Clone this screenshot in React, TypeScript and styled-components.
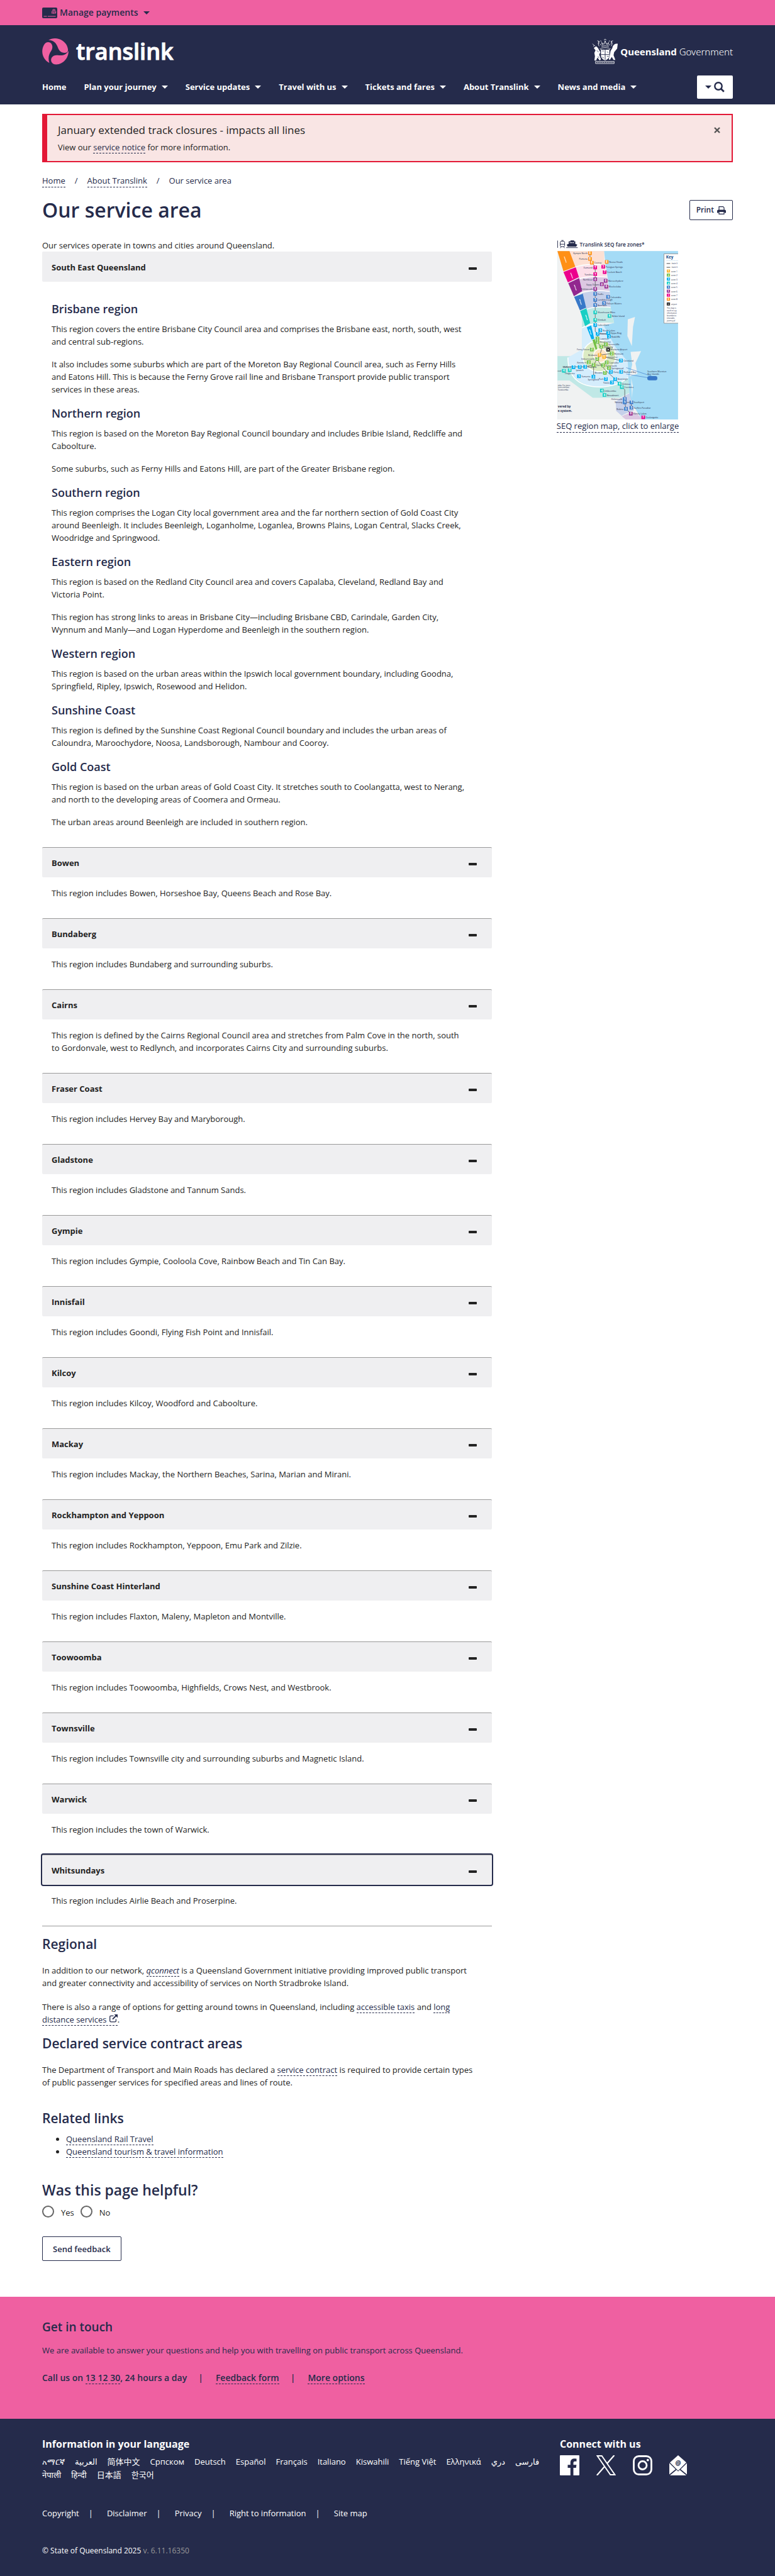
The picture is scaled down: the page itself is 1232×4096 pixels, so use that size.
import React, { useState } from "react";
import styled, { createGlobalStyle } from "styled-components";

const navy = "#252b4b";
const pink = "#ef60a1";
const ink = "#232323";

const GlobalStyle = createGlobalStyle`
  *, *::before, *::after { box-sizing: border-box; }
  body {
    margin: 0;
    background: #fff;
    color: ${ink};
    font: 400 13px/20px "Open Sans", "Noto Sans", "Noto Sans CJK SC", "DejaVu Sans", sans-serif;
  }
  button, input { font: inherit; }
  button { cursor: pointer; }
`;

const Container = styled.div`
  width: 100%;
  max-width: 1130px;
  margin: 0 auto;
  padding: 0 16px;
`;

const TopBar = styled.div`
  background: ${pink};
`;

const TopBarInner = styled(Container)`
  display: flex;
  align-items: center;
  height: 40px;
`;

const PaymentsButton = styled.button`
  display: flex;
  align-items: center;
  gap: 4px;
  padding: 0;
  border: 0;
  background: none;
  color: ${navy};
  font-size: 14px;
  font-weight: 600;
`;

const Caret = styled.span<{ $gap?: number }>`
  width: 0;
  height: 0;
  margin-left: ${(p) => p.$gap ?? 8}px;
  border: 5px solid transparent;
  border-top-color: currentColor;
  border-bottom-width: 0;
`;

const Header = styled.header`
  background: ${navy};
  color: #fff;
`;

const Brand = styled(Container)`
  display: flex;
  justify-content: space-between;
  align-items: center;
  height: 80px;
  padding-top: 3px;
`;

const LogoLink = styled.a`
  display: flex;
  align-items: center;
  gap: 12px;
  color: #fff;
  text-decoration: none;
`;

const Wordmark = styled.span`
  font: 600 36px/44px "Open Sans", "Noto Sans", sans-serif;
  -webkit-text-stroke: 1px #fff;
`;

const GovLink = styled(LogoLink)`
  gap: 3px;
  font: 700 15px/24px "Noto Sans", "Open Sans", sans-serif;
  span { font-weight: 300; }
`;

const NavRow = styled(Container)`
  display: flex;
  justify-content: space-between;
  align-items: flex-start;
  height: 46px;
`;

const NavList = styled.ul`
  display: flex;
  gap: 28px;
  margin: 0;
  padding: 8px 0 0;
  list-style: none;
`;

const NavLink = styled.a`
  display: flex;
  align-items: center;
  color: #fff;
  font-weight: 700;
  text-decoration: none;
  white-space: nowrap;
`;

const SearchButton = styled.button`
  display: flex;
  align-items: center;
  justify-content: center;
  gap: 4px;
  width: 57px;
  height: 37px;
  padding: 0;
  border: 0;
  border-radius: 2px;
  background: #fff;
  color: ${navy};
`;

const Alert = styled.section`
  display: flex;
  justify-content: space-between;
  align-items: flex-start;
  margin-top: 15px;
  padding: 12px 18px 12px 17px;
  border: 2px solid #e31836;
  border-left-width: 8px;
  background: #f9e5e4;
`;

const AlertTitle = styled.h2`
  margin: 0 0 5px;
  font-size: 17px;
  line-height: 24px;
  font-weight: 400;
`;

const CloseButton = styled.button`
  display: flex;
  padding: 7px 0;
  border: 0;
  background: none;
  color: #555;
`;

const TextLink = styled.a`
  color: ${navy};
  text-decoration: none;
  border-bottom: 1px dashed ${navy};
`;

const Crumbs = styled.ol`
  display: flex;
  gap: 15px;
  margin: 19px 0 0;
  padding: 0;
  list-style: none;
  color: ${navy};
  li { display: flex; gap: 15px; }
`;

const TitleRow = styled.div`
  display: flex;
  justify-content: space-between;
  align-items: center;
  margin-top: 16px;
`;

const headingFont = `"Open Sans", "Noto Sans", sans-serif`;

const PageTitle = styled.h1`
  margin: 0;
  color: ${navy};
  font: 600 32px/40px ${headingFont};
`;

const OutlineButton = styled.button<{ $small?: boolean }>`
  display: inline-flex;
  align-items: center;
  justify-content: center;
  gap: 5px;
  height: ${(p) => (p.$small ? 32 : 39)}px;
  padding: 0 ${(p) => (p.$small ? 10 : 16)}px;
  border: 1px solid ${navy};
  border-radius: 2px;
  background: #fff;
  color: ${navy};
  font-weight: 600;
  font-size: ${(p) => (p.$small ? 12 : 13)}px;
`;

const Columns = styled.div`
  display: flex;
  align-items: flex-start;
  gap: 17px;
  margin-top: 26px;
`;

const Main = styled.main`
  flex: 715 1 0;
  min-width: 0;
`;

const Aside = styled.aside`
  flex: 366 1 0;
  display: flex;
  flex-direction: column;
  align-items: center;
`;

const MapLink = styled.a`
  display: flex;
  flex-direction: column;
  align-items: center;
  color: ${navy};
  text-decoration: none;
  span { border-bottom: 1px dashed ${navy}; }
`;

const Intro = styled.p`
  margin: 0;
`;

const Accordion = styled.div`
  border-bottom: 1px solid #999;
`;

const AccordionTitle = styled.h3`
  margin: 0;
  font: inherit;
`;

const AccordionButton = styled.button<{ $first?: boolean }>`
  display: flex;
  justify-content: space-between;
  align-items: center;
  width: 100%;
  height: 48px;
  padding: 0 24px 0 15px;
  border: 0;
  border-top: 1px solid ${(p) => (p.$first ? "#efeff1" : "#999")};
  border-radius: 2px;
  background: #efeff1;
  color: ${ink};
  font-weight: 700;
  text-align: left;
  &:focus { outline: 2px solid ${navy}; }
`;

const Minus = styled.span`
  width: 13px;
  height: 4px;
  margin-top: 4px;
  border-radius: 1px;
  background: ${ink};
`;

const AccordionBody = styled.div`
  padding: 15px 40px 14px 15px;
  p { margin: 0 0 16px; }
`;

const RegionHeading = styled.h4`
  margin: 16px 0 10px;
  color: ${navy};
  font: 600 18px/24px ${headingFont};
`;

const Section = styled.section<{ $top: number }>`
  margin-top: ${(p) => p.$top}px;
  padding-right: 20px;
  p { margin: 0; }
  p + p { margin-top: 18px; }
`;

const SectionHeading = styled.h2<{ $gap: number }>`
  margin: 0 0 ${(p) => p.$gap}px;
  color: ${navy};
  font: 600 21px/26px ${headingFont};
`;

const LinkList = styled.ul`
  margin: 0;
  padding-left: 38px;
`;

const Feedback = styled.form`
  margin: 35px 0 57px;
`;

const FeedbackTitle = styled.h2`
  margin: 0 0 9px;
  color: ${navy};
  font: 600 23px/32px ${headingFont};
`;

const Options = styled.fieldset`
  display: flex;
  gap: 10px;
  margin: 0 0 30px;
  padding: 0;
  border: 0;
  label { display: flex; gap: 11px; line-height: 22px; height: 19px; }
`;

const Radio = styled.input`
  appearance: none;
  width: 19px;
  height: 19px;
  margin: 0;
  border: 2px solid #666;
  border-radius: 50%;
  &:checked { background: radial-gradient(${navy} 40%, #fff 45%); }
`;

const Contact = styled.section`
  background: ${pink};
  color: ${navy};
  padding: 35px 0 55px;
  p { margin: 0 0 24px; }
`;

const ContactTitle = styled(SectionHeading)`
  font-size: 19px;
`;

const PipeList = styled.ul<{ $bold?: boolean; $before: number; $after: number }>`
  display: flex;
  margin: 0;
  padding: 0;
  list-style: none;
  font-size: ${(p) => (p.$bold ? 14 : 13)}px;
  font-weight: ${(p) => (p.$bold ? 600 : 400)};
  li + li::before {
    content: "|";
    margin: 0 ${(p) => p.$after}px 0 ${(p) => p.$before}px;
  }
`;

const Footer = styled.footer`
  background: ${navy};
  color: #fff;
  padding: 28px 0 30px;
`;

const FooterColumns = styled.div`
  display: flex;
`;

const FooterLink = styled.a`
  color: inherit;
  text-decoration: none;
`;

const Languages = styled.div`
  flex: 823 1 0;
`;

const Connect = styled.div`
  flex: 275 1 0;
`;

const FooterHeading = styled.h2`
  margin: 0 0 6px;
  font: 700 16px/24px ${headingFont};
`;

const LanguageList = styled.ul`
  display: flex;
  flex-wrap: wrap;
  gap: 0 16px;
  margin: 0 16px 0 0;
  padding: 0;
  list-style: none;
  li { height: 21px; line-height: 21px; }
`;

const SocialList = styled.ul`
  display: flex;
  gap: 27px;
  margin: 0;
  padding: 0;
  list-style: none;
  svg { display: block; }
`;

const LegalRow = styled.div`
  margin: 40px 0;
`;

const Copyright = styled.p`
  margin: 0;
  font-size: 12px;
  color: #fff;
  span { color: #999; }
`;

function CardIcon() {
  return (
    <svg width="24" height="17" viewBox="0 0 24 17" aria-hidden="true">
      <rect width="24" height="17" rx="2" fill={navy} />
      <path d="M2.500 14h5M9 14h12.500" stroke={pink} strokeWidth="1" />
      <g fill="none" stroke={pink} strokeWidth="0.9">
        <path d="M15.500 9.500V7.200a3.200 3.200 0 0 1 6.200-1v3M17 10V7.200a1.700 1.700 0 0 1 3.300 0V10M18.600 7.200V10M16.500 3.600a4 4 0 0 1 4.300 0" />
      </g>
    </svg>
  );
}

function TranslinkMark() {
  return (
    <svg width="42" height="43" viewBox="0 0 44 45" aria-hidden="true">
      <g fill={pink}>
        <path d="M10.500 4C15 1 22 0 28 2c8 2.500 14 9 15 17c0.500 5-2.500 6-6 6c-6 0-9-4-10.500-8C24 10 20 4 10.500 4Z" />
        <path d="M3 12C6 6.500 12 6 15 9.500c3 4 2.500 8.500 0 12.500c-4 6-5.500 12-3 20C1 36 -3 23 3 12Z" />
        <path d="M44 22C44 34 35 44 24 44.500C16 45 13 38 16 33c3-4 7-4.500 12-3.700C35 30 40 28 44 22Z" />
      </g>
    </svg>
  );
}

function CrestIcon() {
  return (
    <svg width="42" height="41" viewBox="0 0 44 43" aria-hidden="true">
      <g fill="#fff">
        <path d="M15 19h14v9c0 5-3 7-7 9c-4-2-7-4-7-9Z" />
        <path d="M3 16l4-3 3 3 4 7-2 4 3 8-2 2-4-5-2 5H4l1-7-1-6 2-4Z" />
        <path d="M43 9l-1 8-5 6-1 5 3 8h-3l-3-5-3 5-2-1 2-8 1-6 3-5c1-5 4-7 8-7Z" />
      </g>
      <path d="M22 19v17M15 27h14" stroke={navy} strokeWidth="1" />
      <path d="M17 21h3M25 22l2 2M17 31l3 2M25 30h3M8 20l3 3M10 30l2 3" stroke={navy} strokeWidth="0.8" />
      <g fill="none" stroke="#fff" strokeWidth="0.9">
        <path d="M15 17c2-2 12-2 14 0M16 14c2-2 10-2 12 0M18 12l-2-5 4 3 2-6 2 6 4-3-2 5M20 3l2-2 2 2M12 13c-2-3-2-6 0-8M9 4l3 1-1 4M32 13c2-3 2-6 0-8M35 4l-3 1 1 4M13 9l3 3M31 9l-3 3M1 9l3 3M2 13l3-1M14 4l2 1M30 4l-2 1" />
        <path d="M13 17l3 2M31 17l-3 2M6 38.500h31v3.500H6Z" />
      </g>
      <path d="M8 40.200h28" stroke="#fff" strokeWidth="1.200" strokeDasharray="2 1" opacity="0.6" />
    </svg>
  );
}

function SearchIcon() {
  return (
    <svg width="17" height="17" viewBox="0 0 17 17" fill="none" stroke={navy} aria-hidden="true">
      <circle cx="7" cy="7" r="5.700" strokeWidth="2.400" />
      <path d="M11 11l4.800 4.800" strokeWidth="2.800" />
    </svg>
  );
}

function PrintIcon() {
  return (
    <svg width="14" height="13" viewBox="0 0 14 13" aria-hidden="true">
      <path d="M3 6V0.700h6.500L11 2.200V6" fill="#fff" stroke={navy} strokeWidth="1.200" />
      <path d="M0 10.500V7.500Q0 5.500 2 5.500h10q2 0 2 2v3h-2.500V9h-9v1.500Z" fill={navy} />
      <path d="M3 9v3.300h8V9" fill="#fff" stroke={navy} strokeWidth="1.200" />
    </svg>
  );
}

function ExternalIcon() {
  return (
    <svg width="14" height="13" viewBox="0 0 14 13" fill="none" stroke={navy} aria-hidden="true">
      <path d="M7.500 2.300H3.300Q1.700 2.300 1.700 3.900v6.300q0 1.600 1.600 1.600h6.500q1.600 0 1.600-1.600V7.500" strokeWidth="1.300" />
      <path d="M6 7.700L12 1.700" strokeWidth="1.900" />
      <path d="M8.500 0H14v5.500Z" fill={navy} stroke="none" />
    </svg>
  );
}

/* Each zone: the wedge on the left edge, its colour, the tint and the area it covers. */
const zones: [string, string, string, string][] = [
  ["120,110 180,110 209,188 150,210", "#ff9016", "#fde0d3", "M178 110H352V178Q260 170 207 190Z"],
  ["150,214 211,191 227,240 172,266", "#ec008c", "#fcdfe9", "M208 194Q270 175 352 182L365 240Q290 232 225 248Z"],
  ["174,270 228,245 243,310 202,335", "#92278f", "#dcc8e2", "M226 252Q290 236 365 242L380 310Q300 300 240 316Z"],
  ["203,338 246,322 263,392 232,405", "#3878c8", "#c6d0ea", "M242 320Q310 302 380 314L384 388Q310 382 264 400Z"],
  ["233,408 264,395 283,468 258,484", "#19cfc4", "#c0e8e6", "M242 405Q310 384 384 392L402 468Q300 458 242 490Z"],
  ["266,490 288,480 303,546 290,550", "#00aeef", "#d5edfc", "M242 494Q310 470 350 480V560H242Z"],
  ["294,552 306,548 318,598 310,600", "#72bf44", "#dcebc4", "M300 560H330V600H300Z"],
];

type Stop = [number, number, number, string, ("l" | "r" | "b")?];

const stops: Stop[] = [
  [282, 121, 8, "Gympie North", "l"], [282, 149, 8, "Pomona", "l"], [291, 168, 8, "Cooroy"],
  [365, 164, 8, "Noosa Heads"], [308, 192, 7, "Eumundi", "l"], [348, 188, 7, "Peregian Springs"],
  [355, 215, 7, "Coolum Beach"], [308, 225, 7, "Yandina", "l"], [308, 250, 6, "Nambour", "l"],
  [360, 258, 6, "Maroochydore"], [341, 275, 6, "Sippy Downs", "l"], [363, 287, 6, "Mooloolaba"],
  [308, 299, 6, "Palmwoods", "l"], [308, 323, 5, "Eudlo"], [372, 338, 5, "Caloundra"],
  [308, 353, 5, "Landsborough"], [352, 369, 5, "Pelican Waters"], [308, 379, 5, "Beerwah"],
  [308, 415, 4, "Glasshouse Mtns"], [379, 433, 4, "Bribie Island"], [308, 453, 4, "Elimbah"],
  [308, 478, 3, "Caboolture"], [333, 504, 3, "North Lakes"], [372, 518, 3, "Kippa-Ring"],
  [320, 522, 3, "Petrie"], [376, 535, 3, "Redcliffe"], [319, 545, 2, "Lawnton"],
  [319, 561, 2, "Strathpine"], [361, 574, 2, "Shorncliffe"], [338, 586, 2, "Geebung"],
  [291, 600, 2, "Ferny Grove", "l"], [390, 620, 2, "Wynnum"], [330, 627, 1, "Brisbane", "l"],
  [352, 637, 1, "Coorparoo"], [318, 647, 2, "Indooroopilly", "l"], [436, 655, 3, "Cleveland"],
  [276, 663, 2, "Kenmore", "l"], [365, 664, 2, "Capalaba"], [300, 677, 2, "Darra"],
  [347, 679, 2, "Sunnybank"], [376, 692, 2, "Springwood"], [258, 686, 3, "Redbank"],
  [231, 687, 3, "Ipswich", "b"], [200, 688, 3, "Walloon", "l"], [181, 703, 4, "Thagoona", "b"],
  [152, 706, 4, "ood", "l"], [437, 711, 3, "Redland Bay"], [386, 711, 3, "Daisy"],
  [356, 716, 2, "Browns", "l"], [299, 735, 3, "Springfield", "b"], [227, 733, 3, "Yamanto"],
  [361, 747, 3, "Park", "l"], [407, 747, 3, "Beenleigh"], [391, 764, 3, "Yatala", "l"],
  [429, 770, 4, "Ormeau"], [440, 787, 4, "Coomera"], [341, 804, 4, "Jimboomba"],
  [354, 826, 4, "Beaudesert"], [455, 846, 5, "Helensvale", "l"], [488, 863, 5, "Southport"],
  [455, 863, 5, "Nerang", "l"], [488, 889, 5, "Surfers Paradise"], [461, 895, 5, "Robina", "l"],
  [485, 919, 6, "Varsity Lakes"], [547, 937, 7, "Coolangatta"],
];

const zoneColour = ["", "#fdb733", "#72bf44", "#00aeef", "#19cfc4", "#3878c8", "#92278f", "#ec008c", "#ff9016"];

function FareZoneMap() {
  return (
    <svg
      width="192"
      height="287"
      viewBox="120 50 600 898"
      role="img"
      aria-label="Map of Translink SEQ fare zones"
      fontFamily="Open Sans, sans-serif"
    >
      <g fill="none" stroke={navy} strokeWidth="3">
        <path d="M121 58v36" />
        <rect x="134" y="62" width="22" height="26" rx="5" />
        <path d="M134 76h22M134 95l6-7M156 95l-6-7M140 57h10" />
      </g>
      <path d="M185 57h18v5h6v12l10 4-6 10h-42l-5-10 10-4V62h9Z" fill={navy} />
      <path d="M181 68h24" stroke="#fff" strokeWidth="4" strokeDasharray="5 3" />
      <path d="M164 93h57" stroke={navy} strokeWidth="3" />
      <text x="231" y="86" fill={navy} fontSize="26" fontWeight="600">Translink SEQ fare zones*</text>
      <rect x="120" y="110" width="600" height="838" fill="#a4dbf6" />
      <path d="M120 110H352L360 180 380 310 384 390 402 468 350 480 370 540 400 600 450 640 470 720 480 850 540 948H120Z" fill="#f0f2f2" />
      {zones.map(([band, , fill, area]) => (
        <path key={band} d={area} fill={fill} />
      ))}
      <path d="M120 633H242V495Q300 468 348 480L400 600 470 690 478 815 430 840H296L180 754H120Z" fill="#c0e8e6" />
      <path d="M242 495Q300 468 350 480L410 590 470 660 474 740Q420 786 330 786Q180 780 172 640L242 600Z" fill="#d5edfc" />
      <path d="M172 640Q174 786 330 786Q420 784 470 740" fill="none" stroke="#fff" strokeWidth="5" />
      <ellipse cx="328" cy="632" rx="82" ry="78" fill="#dcebc4" stroke="#fff" strokeWidth="5" />
      <ellipse cx="334" cy="630" rx="34" ry="34" fill="#fde5c5" stroke="#fff" strokeWidth="4" />
      <path d="M410 860Q440 835 478 818L500 905Q460 915 440 930L412 905Z" fill="#c6d0ea" />
      <path d="M440 932Q480 912 510 914L545 948H460Z" fill="#dcc8e2" />
      <path d="M470 450l36-12-10 50-6 95-22-50ZM484 612l52-4-28 60 10 52-40 14 14-60ZM487 742l8 40-4 60Z" fill="#f0f2f2" />
      <g fill="none" stroke="#fff" strokeWidth="4">
        <path d="M207 190Q260 170 352 180M225 247Q290 232 365 240M240 315Q300 300 380 311M264 400Q310 382 384 390M242 492Q300 462 348 478" />
      </g>
      {zones.map(([band, colour]) => (
        <polygon key={band} points={band} fill={colour} />
      ))}
      <g stroke="#fff" strokeWidth="4" strokeDasharray="3 1">
        <path d="M154 138l10 30M186 218l10 28M204 278l10 28M231 350l8 28M261 428l8 26M280 500l8 26" />
      </g>
      <g fill="none" stroke="#555" strokeWidth="2.500">
        <path d="M282 121V150L308 190V510L320 522V560L340 600 330 627M320 522H372M338 586L361 574M330 627L300 677V735M300 677L258 686H152M330 627L320 655 356 700 407 747 455 800V863L461 895 485 919M330 627L390 620M352 637L436 655M455 863H488V889" />
      </g>
      <path d="M462 690L595 735M462 722L570 740" stroke="#3878c8" strokeWidth="2" />
      <rect x="567" y="732" width="50" height="21" rx="10" fill="#3878c8" />
      <g fill={navy} fontSize="11">
        <text x="568" y="712">Southern Moreton</text>
        <text x="568" y="727">Bay Islands</text>
        {stops.map(([x, y, , name, side]) => (
          <text
            key={name}
            x={side === "l" ? x - 12 : side === "b" ? x : x + 12}
            y={side === "b" ? y + 20 : y + 5}
            textAnchor={side === "l" ? "end" : side === "b" ? "middle" : "start"}
          >
            {name}
          </text>
        ))}
        <text x="384" y="605">Brisbane Airport</text>
        <text x="122" y="781" fontSize="9">mbo. For more</text>
        <text x="122" y="792" fontSize="9">tions and bus</text>
        <text x="122" y="803" fontSize="9">Toowoomba</text>
        <text x="122" y="889" fontSize="15" fontWeight="700">vered by</text>
        <text x="122" y="911" fontSize="15" fontWeight="700">e system.</text>
      </g>
      {stops.map(([x, y, zone, name]) => (
        <g key={name}>
          <rect x={x - 9} y={y - 9} width="18" height="18" fill={zoneColour[zone]} />
          <text x={x} y={y + 5} fill="#fff" fontSize="14" fontWeight="700" textAnchor="middle">{zone}</text>
        </g>
      ))}
      <rect x="363" y="591" width="19" height="19" fill="#222" />
      <path d="M367 595l11 11M378 595l-11 11" stroke="#fff" strokeWidth="2.500" />
      <path d="M722 124H650V469H722" fill="#fff" stroke="#888" strokeWidth="2.500" />
      <text x="660" y="147" fill="#1b4f8c" fontSize="20" fontWeight="700">Key</text>
      <path d="M662 158h58" stroke="#7fb4d8" strokeWidth="1.500" strokeDasharray="3 2" />
      <path d="M663 172h18M663 191h18" stroke="#444" strokeWidth="3" />
      <g fill={navy} fontSize="10">
        <text x="688" y="176">train li</text>
        <text x="688" y="195">train li</text>
        {[1, 2, 3, 4, 5, 6, 7, 8].map((n) => (
          <text key={n} x="686" y={195 + n * 20}>zone {n}</text>
        ))}
        <text x="686" y="377" fontSize="9">airport</text>
        {["This map is", "used on a g", "information", "boundaries", "timetable", "journey pl"].map((t, i) => (
          <text key={t} x="664" y={396 + i * 13} fontSize="9">{t}</text>
        ))}
      </g>
      {[1, 2, 3, 4, 5, 6, 7, 8].map((n) => (
        <g key={n}>
          <rect x="664" y={n * 20 + 182} width="16" height="15" fill={zoneColour[n]} />
          <text x="672" y={n * 20 + 194} fill="#fff" fontSize="12" fontWeight="700" textAnchor="middle">{n}</text>
        </g>
      ))}
      <rect x="664" y="366" width="16" height="15" fill="#222" />
      <path d="M668 370l8 8M676 370l-8 8" stroke="#fff" strokeWidth="2" />
    </svg>
  );
}

function FacebookIcon() {
  return (
    <svg width="31" height="32" viewBox="0 0 31 32" aria-hidden="true">
      <path d="M1 0h29q1 0 1 1v30q0 1-1 1h-8.500V20h4.200l0.700-4.800h-4.900V12q0-2.300 2.400-2.300h2.600V5.400q-9.200-1.500-9.700 5.400v4.400h-4.300V20h4.300v12H1q-1 0-1-1V1Q0 0 1 0Z" fill="#fff" />
    </svg>
  );
}

function XIcon() {
  return (
    <svg width="31" height="32" viewBox="0 0 31 32" aria-hidden="true">
      <path d="M1.500 1h7.200l20.800 30h-7.200Z" fill="none" stroke="#fff" strokeWidth="2" />
      <path d="M28.500 0L17 13.200M13 18L0.800 32" stroke="#fff" strokeWidth="2.200" />
    </svg>
  );
}

function InstagramIcon() {
  return (
    <svg width="31" height="32" viewBox="0 0 31 32" fill="none" stroke="#fff" aria-hidden="true">
      <rect x="1.500" y="1.500" width="28" height="29" rx="8" strokeWidth="2.800" />
      <circle cx="15.500" cy="16" r="6.500" strokeWidth="2.800" />
      <circle cx="23.800" cy="7.700" r="1.900" fill="#fff" stroke="none" />
    </svg>
  );
}

function NewsletterIcon() {
  return (
    <svg width="28" height="32" viewBox="0 0 28 32" aria-hidden="true">
      <path d="M14 0l13 11.500L14 24.500 1 11.500Z" fill="#fff" />
      <path d="M0 12.500L10 22.300 0 30.500ZM28 12.500L18 22.300l10 8.200ZM1 32l10.500-8.700L14 25.800l2.500-2.500L27 32Z" fill="#fff" />
      <text x="14" y="16" textAnchor="middle" fill={navy} fontFamily="Open Sans, sans-serif" fontSize="10" fontWeight="700">@</text>
    </svg>
  );
}

const navItems = [
  "Home",
  "Plan your journey",
  "Service updates",
  "Travel with us",
  "Tickets and fares",
  "About Translink",
  "News and media",
];

const seqRegions: { name: string; text: string[] }[] = [
  {
    name: "Brisbane region",
    text: [
      "This region covers the entire Brisbane City Council area and comprises the Brisbane east, north, south, west and central sub-regions.",
      "It also includes some suburbs which are part of the Moreton Bay Regional Council area, such as Ferny Hills and Eatons Hill. This is because the Ferny Grove rail line and Brisbane Transport provide public transport services in these areas.",
    ],
  },
  {
    name: "Northern region",
    text: [
      "This region is based on the Moreton Bay Regional Council boundary and includes Bribie Island, Redcliffe and Caboolture.",
      "Some suburbs, such as Ferny Hills and Eatons Hill, are part of the Greater Brisbane region.",
    ],
  },
  {
    name: "Southern region",
    text: [
      "This region comprises the Logan City local government area and the far northern section of Gold Coast City around Beenleigh. It includes Beenleigh, Loganholme, Loganlea, Browns Plains, Logan Central, Slacks Creek, Woodridge and Springwood.",
    ],
  },
  {
    name: "Eastern region",
    text: [
      "This region is based on the Redland City Council area and covers Capalaba, Cleveland, Redland Bay and Victoria Point.",
      "This region has strong links to areas in Brisbane City—including Brisbane CBD, Carindale, Garden City, Wynnum and Manly—and Logan Hyperdome and Beenleigh in the southern region.",
    ],
  },
  {
    name: "Western region",
    text: [
      "This region is based on the urban areas within the Ipswich local government boundary, including Goodna, Springfield, Ripley, Ipswich, Rosewood and Helidon.",
    ],
  },
  {
    name: "Sunshine Coast",
    text: [
      "This region is defined by the Sunshine Coast Regional Council boundary and includes the urban areas of Caloundra, Maroochydore, Noosa, Landsborough, Nambour and Cooroy.",
    ],
  },
  {
    name: "Gold Coast",
    text: [
      "This region is based on the urban areas of Gold Coast City. It stretches south to Coolangatta, west to Nerang, and north to the developing areas of Coomera and Ormeau.",
      "The urban areas around Beenleigh are included in southern region.",
    ],
  },
];

const otherRegions: [string, string][] = [
  ["Bowen", "This region includes Bowen, Horseshoe Bay, Queens Beach and Rose Bay."],
  ["Bundaberg", "This region includes Bundaberg and surrounding suburbs."],
  ["Cairns", "This region is defined by the Cairns Regional Council area and stretches from Palm Cove in the north, south to Gordonvale, west to Redlynch, and incorporates Cairns City and surrounding suburbs."],
  ["Fraser Coast", "This region includes Hervey Bay and Maryborough."],
  ["Gladstone", "This region includes Gladstone and Tannum Sands."],
  ["Gympie", "This region includes Gympie, Cooloola Cove, Rainbow Beach and Tin Can Bay."],
  ["Innisfail", "This region includes Goondi, Flying Fish Point and Innisfail."],
  ["Kilcoy", "This region includes Kilcoy, Woodford and Caboolture."],
  ["Mackay", "This region includes Mackay, the Northern Beaches, Sarina, Marian and Mirani."],
  ["Rockhampton and Yeppoon", "This region includes Rockhampton, Yeppoon, Emu Park and Zilzie."],
  ["Sunshine Coast Hinterland", "This region includes Flaxton, Maleny, Mapleton and Montville."],
  ["Toowoomba", "This region includes Toowoomba, Highfields, Crows Nest, and Westbrook."],
  ["Townsville", "This region includes Townsville city and surrounding suburbs and Magnetic Island."],
  ["Warwick", "This region includes the town of Warwick."],
  ["Whitsundays", "This region includes Airlie Beach and Proserpine."],
];

const languages = [
  "አማርኛ", "العربية", "简体中文", "Српском", "Deutsch", "Español", "Français", "Italiano", "Kiswahili",
  "Tiếng Việt", "Ελληνικά", "دري", "فارسی", "नेपाली", "हिन्दी", "日本語", "한국어",
];

function AccordionItem(props: { title: string; first?: boolean; focused?: boolean; children: React.ReactNode }) {
  const [open, setOpen] = useState(true);
  return (
    <section>
      <AccordionTitle>
        <AccordionButton
          type="button"
          aria-expanded={open}
          autoFocus={props.focused}
          $first={props.first}
          onClick={() => setOpen(!open)}
        >
          {props.title}
          <Minus />
        </AccordionButton>
      </AccordionTitle>
      {open && <AccordionBody>{props.children}</AccordionBody>}
    </section>
  );
}

export default function App() {
  return (
    <>
      <GlobalStyle />
      <TopBar>
        <TopBarInner>
          <PaymentsButton type="button">
            <CardIcon />
            Manage payments
            <Caret $gap={4} />
          </PaymentsButton>
        </TopBarInner>
      </TopBar>
      <Header>
        <Brand>
          <LogoLink href="#home">
            <TranslinkMark />
            <Wordmark>translink</Wordmark>
          </LogoLink>
          <GovLink href="#qld">
            <CrestIcon />
            <div>
              Queensland <span>Government</span>
            </div>
          </GovLink>
        </Brand>
        <NavRow>
          <nav>
            <NavList>
              {navItems.map((item) => (
                <li key={item}>
                  <NavLink href="#nav">
                    {item}
                    {item !== "Home" && <Caret />}
                  </NavLink>
                </li>
              ))}
            </NavList>
          </nav>
          <SearchButton type="button" aria-label="Search">
            <Caret $gap={0} />
            <SearchIcon />
          </SearchButton>
        </NavRow>
      </Header>

      <Container>
        <Alert>
          <div>
            <AlertTitle>January extended track closures - impacts all lines</AlertTitle>
            View our <TextLink href="#notice">service notice</TextLink> for more information.
          </div>
          <CloseButton type="button" aria-label="Close">
            <svg width="10" height="10" viewBox="0 0 10 10" stroke="currentColor" strokeWidth="2.400">
              <path d="M1 1l8 8M9 1l-8 8" />
            </svg>
          </CloseButton>
        </Alert>

        <Crumbs>
          <li>
            <TextLink href="#home">Home</TextLink>/
          </li>
          <li>
            <TextLink href="#about">About Translink</TextLink>/
          </li>
          <li>Our service area</li>
        </Crumbs>

        <TitleRow>
          <PageTitle>Our service area</PageTitle>
          <OutlineButton type="button" $small>
            Print <PrintIcon />
          </OutlineButton>
        </TitleRow>

        <Columns>
          <Main>
            <Intro>Our services operate in towns and cities around Queensland.</Intro>
            <Accordion>
              <AccordionItem title="South East Queensland" first>
                {seqRegions.map((region) => (
                  <React.Fragment key={region.name}>
                    <RegionHeading>{region.name}</RegionHeading>
                    {region.text.map((t) => (
                      <p key={t}>{t}</p>
                    ))}
                  </React.Fragment>
                ))}
              </AccordionItem>
              {otherRegions.map(([name, text]) => (
                <AccordionItem key={name} title={name} focused={name === "Whitsundays"}>
                  <p>{text}</p>
                </AccordionItem>
              ))}
            </Accordion>

            <Section $top={15}>
              <SectionHeading $gap={19}>Regional</SectionHeading>
              <p>
                In addition to our network,{" "}
                <TextLink href="#qconnect">
                  <em>qconnect</em>
                </TextLink>{" "}
                is a Queensland Government initiative providing improved public transport and greater connectivity and
                accessibility of services on North Stradbroke Island.
              </p>
              <p>
                There is also a range of options for getting around towns in Queensland, including{" "}
                <TextLink href="#taxis">accessible taxis</TextLink> and{" "}
                <TextLink href="#long-distance">
                  long distance services <ExternalIcon />
                </TextLink>
                .
              </p>
            </Section>
            <Section $top={15}>
              <SectionHeading $gap={19}>Declared service contract areas</SectionHeading>
              <p>
                The Department of Transport and Main Roads has declared a{" "}
                <TextLink href="#contract">service contract</TextLink> is required to provide certain types of public
                passenger services for specified areas and lines of route.
              </p>
            </Section>
            <Section $top={34}>
              <SectionHeading $gap={10}>Related links</SectionHeading>
              <LinkList>
                <li>
                  <TextLink href="#rail">Queensland Rail Travel</TextLink>
                </li>
                <li>
                  <TextLink href="#tourism">Queensland tourism &amp; travel information</TextLink>
                </li>
              </LinkList>
            </Section>

            <Feedback onSubmit={(e) => e.preventDefault()}>
              <FeedbackTitle>Was this page helpful?</FeedbackTitle>
              <Options aria-label="Was this page helpful?">
                <label>
                  <Radio type="radio" name="helpful" value="yes" />
                  Yes
                </label>
                <label>
                  <Radio type="radio" name="helpful" value="no" />
                  No
                </label>
              </Options>
              <OutlineButton type="submit">Send feedback</OutlineButton>
            </Feedback>
          </Main>

          <Aside>
            <MapLink href="#map">
              <FareZoneMap />
              <span>SEQ region map, click to enlarge</span>
            </MapLink>
          </Aside>
        </Columns>
      </Container>

      <Contact>
        <Container>
          <ContactTitle $gap={14}>Get in touch</ContactTitle>
          <p>We are available to answer your questions and help you with travelling on public transport across Queensland.</p>
          <PipeList $bold $before={18} $after={20}>
            <li>
              Call us on <TextLink href="tel:131230">13 12 30</TextLink>, 24 hours a day
            </li>
            <li>
              <TextLink href="#feedback">Feedback form</TextLink>
            </li>
            <li>
              <TextLink href="#more">More options</TextLink>
            </li>
          </PipeList>
        </Container>
      </Contact>

      <Footer>
        <Container>
          <FooterColumns>
            <Languages>
              <FooterHeading>Information in your language</FooterHeading>
              <LanguageList>
                {languages.map((l) => (
                  <li key={l}>
                    <FooterLink href="#language">{l}</FooterLink>
                  </li>
                ))}
              </LanguageList>
            </Languages>
            <Connect>
              <FooterHeading>Connect with us</FooterHeading>
              <SocialList>
                <li>
                  <FooterLink href="#facebook" aria-label="Facebook"><FacebookIcon /></FooterLink>
                </li>
                <li>
                  <FooterLink href="#x" aria-label="X"><XIcon /></FooterLink>
                </li>
                <li>
                  <FooterLink href="#instagram" aria-label="Instagram"><InstagramIcon /></FooterLink>
                </li>
                <li>
                  <FooterLink href="#newsletter" aria-label="Newsletter"><NewsletterIcon /></FooterLink>
                </li>
              </SocialList>
            </Connect>
          </FooterColumns>
          <LegalRow>
            <PipeList $before={15} $after={22}>
              {["Copyright", "Disclaimer", "Privacy", "Right to information", "Site map"].map((t) => (
                <li key={t}>
                  <FooterLink href="#legal">{t}</FooterLink>
                </li>
              ))}
            </PipeList>
          </LegalRow>
          <Copyright>
            © State of Queensland 2025 <span>v. 6.11.16350</span>
          </Copyright>
        </Container>
      </Footer>
    </>
  );
}
